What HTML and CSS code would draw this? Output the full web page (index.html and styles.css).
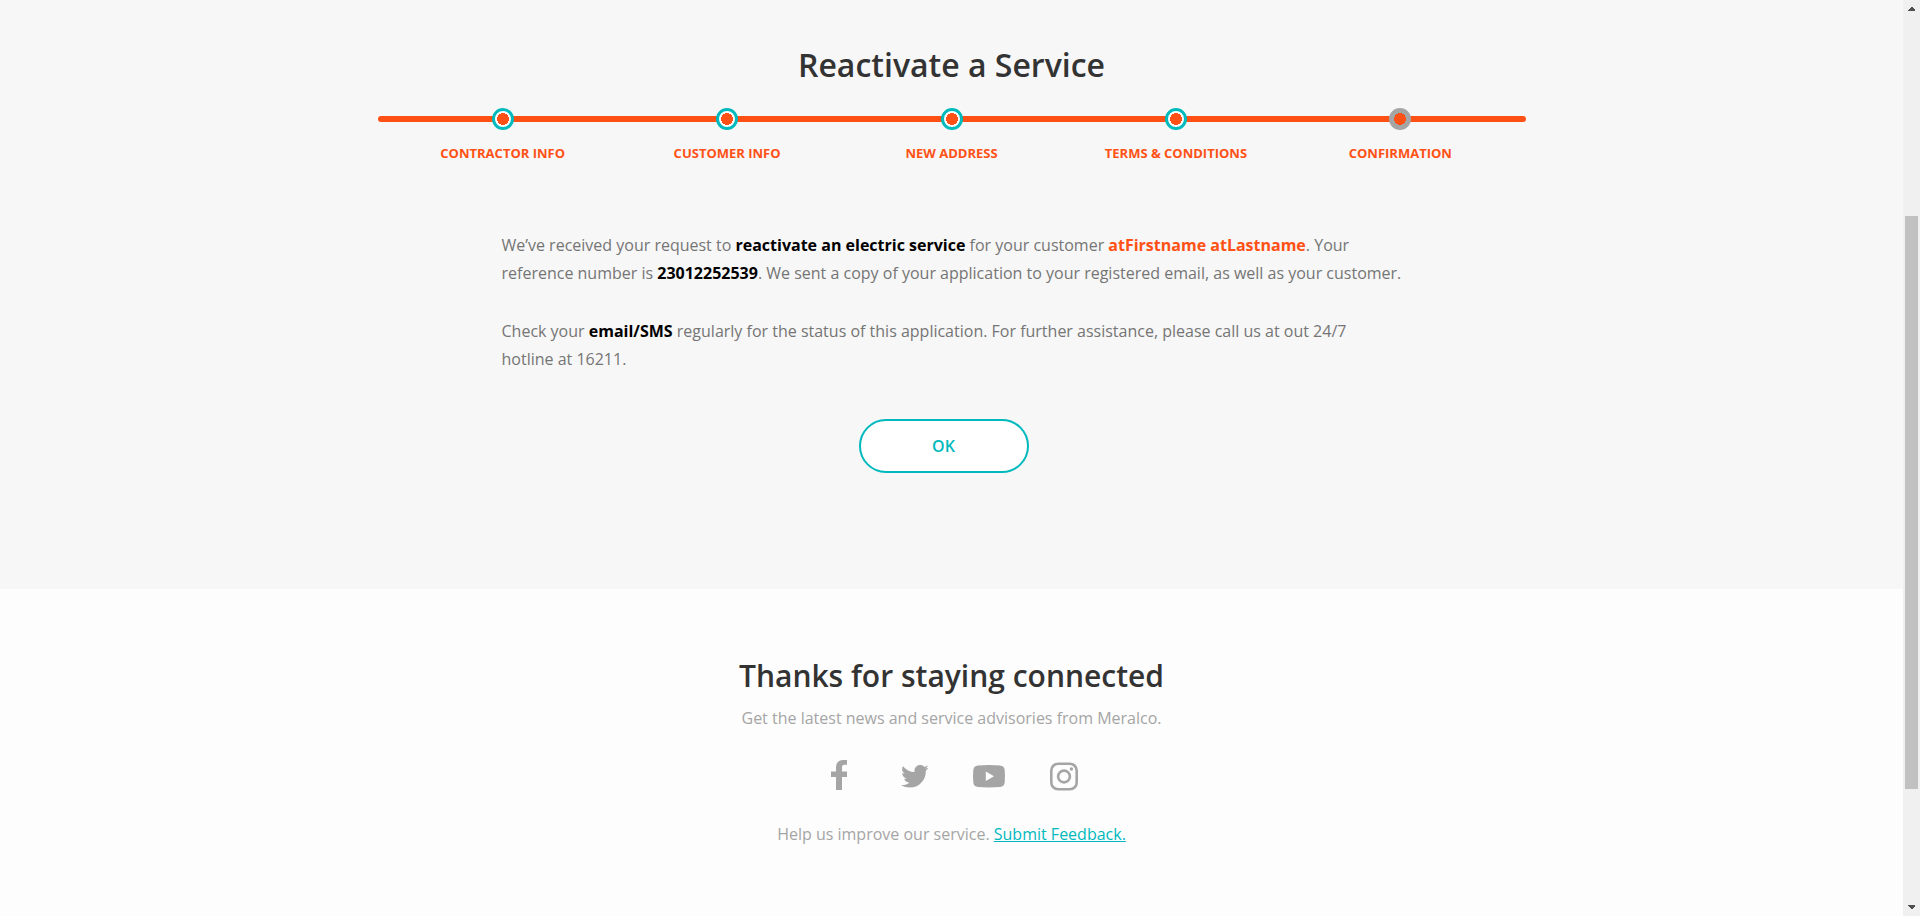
FILE: index.html
```html
<!DOCTYPE html>
<html lang="en">
<head>
<meta charset="utf-8">
<title>Reactivate a Service</title>
<link rel="stylesheet" href="styles.css">
</head>
<body>
<div class="page">
  <main class="application">
    <h1 class="application-title">Reactivate a Service</h1>
    <ol class="steps">
      <li class="step"><span class="dot"></span>Contractor Info</li>
      <li class="step"><span class="dot"></span>Customer Info</li>
      <li class="step"><span class="dot"></span>New Address</li>
      <li class="step"><span class="dot"></span>Terms &amp; Conditions</li>
      <li class="step"><span class="dot dot-current"></span>Confirmation</li>
    </ol>
    <div class="message">
      <p>We’ve received your request to <strong>reactivate an electric service</strong> for your customer <strong class="customer">atFirstname atLastname</strong>. Your reference number is <strong>23012252539</strong>. We sent a copy of your application to your registered email, as well as your customer.</p>
      <p>Check your <strong>email/SMS</strong> regularly for the status of this application. For further assistance, please call us at out 24/7 hotline at 16211.</p>
    </div>
    <button class="ok" type="button">OK</button>
  </main>
  <footer class="connect">
    <h2 class="connect-title">Thanks for staying connected</h2>
    <p class="connect-text">Get the latest news and service advisories from Meralco.</p>
    <nav class="social" aria-label="Social media">
      <a href="#" aria-label="Facebook"><svg width="36" height="32" viewBox="0 0 36 32"><path d="M15 31V18H10v-5.600h5V8.600C15 3.700 17.600 1 22.400 1H26v4.800h-2.400C21.600 5.800 21 6.800 21 8.600v3.800h5V18h-5v13z"/></svg></a>
      <a href="#" aria-label="Twitter"><svg width="36" height="32" viewBox="0 0 36 32"><path transform="translate(5 3.500) scale(.054)" d="M459.370 151.716c.325 4.548.325 9.097.325 13.645 0 138.720-105.583 298.558-298.558 298.558-59.452 0-114.680-17.219-161.137-47.106 8.447.974 16.568 1.299 25.340 1.299 49.055 0 94.213-16.568 130.274-44.832-46.132-.975-84.792-31.188-98.112-72.772 6.498.974 12.995 1.624 19.818 1.624 9.421 0 18.843-1.300 27.614-3.573-48.081-9.747-84.143-51.980-84.143-102.985v-1.299c13.969 7.797 30.214 12.670 47.431 13.319-28.264-18.843-46.781-51.005-46.781-87.391 0-19.492 5.197-37.360 14.294-52.954 51.655 63.675 129.300 105.258 216.365 109.807-1.624-7.797-2.599-15.918-2.599-24.040 0-57.828 46.782-104.934 104.934-104.934 30.213 0 57.502 12.670 76.670 33.137 23.715-4.548 46.456-13.320 66.599-25.340-7.798 24.366-24.366 44.833-46.132 57.827 21.117-2.273 41.584-8.122 60.426-16.243-14.292 20.791-32.161 39.308-52.628 54.253z"/></svg></a>
      <a href="#" aria-label="YouTube"><svg width="36" height="32" viewBox="0 0 36 32"><path fill-rule="evenodd" d="M7 6.400q11-.8 22 0 4.300.3 4.700 4.500.6 6.600 0 12.600-.4 4.200-4.700 4.500-11 .8-22 0-4.300-.3-4.700-4.500-.6-6.600 0-12.600Q2.700 6.700 7 6.400zM14.800 12.500v9.400l8.200-4.700z"/></svg></a>
      <a href="#" aria-label="Instagram"><svg width="36" height="32" viewBox="0 0 36 32"><g fill="none" stroke="currentColor"><rect x="5.300" y="4.800" width="25.400" height="25.400" rx="6.800" stroke-width="2.600"/><circle cx="18" cy="17.500" r="5.900" stroke-width="2.600"/></g><circle cx="25.400" cy="10" r="1.700"/></svg></a>
    </nav>
    <p class="connect-text">Help us improve our service. <a class="feedback" href="#">Submit Feedback.</a></p>
  </footer>
</div>
<div class="scrollbar" aria-hidden="true">
  <svg width="17" height="17" viewBox="0 0 17 17" shape-rendering="crispEdges"><path d="M5 11V10L8.500 6.500 12 10v1z"/></svg>
  <div class="scroll-track"><div class="scroll-thumb"></div></div>
  <svg width="17" height="17" viewBox="0 0 17 17" shape-rendering="crispEdges"><path d="M5 6v1l3.500 3.500L12 7V6z"/></svg>
</div>
</body>
</html>
```
FILE: styles.css
```css
* {
  box-sizing: border-box;
}

body {
  margin: 0;
  display: flex;
  min-height: 100vh;
  font: 16px/28px "Open Sans", "Noto Sans", sans-serif;
  color: #757575;
  background: #fdfdfd;
}

h1, h2, p, ol {
  margin: 0;
  padding: 0;
  font-weight: 400;
}

.page {
  flex: 1;
}

.application {
  display: flex;
  flex-direction: column;
  align-items: center;
  padding: 43px 24px 116px;
  background: #f7f7f7;
}

.application-title,
.connect-title {
  font-weight: 600;
  line-height: 44px;
  color: #333;
}

.application-title {
  font-size: 32px;
}

.steps {
  position: relative;
  display: flex;
  width: 100%;
  max-width: 1148px;
  margin-top: 21px;
  padding: 0 13px;
  list-style: none;
}

/* Progress line running behind the dots */
.steps::before {
  content: "";
  position: absolute;
  inset: 8px 0 auto;
  height: 6px;
  border-radius: 3px;
  background: #ff5115;
}

.step {
  position: relative;
  flex: 1;
  display: flex;
  flex-direction: column;
  align-items: center;
  gap: 13px;
  font-size: 13px;
  line-height: 20px;
  font-weight: 700;
  text-transform: uppercase;
  color: #ff5115;
}

.dot {
  width: 22px;
  height: 22px;
  border: 3px solid #00b9bd;
  border-radius: 50%;
  background: radial-gradient(circle, #ff5115 6px, #fff 6px);
}

.dot-current {
  border-color: #a5a5a5;
  background: radial-gradient(circle, #ff5115 6px, #a5a5a5 6px);
}

.message {
  display: grid;
  gap: 30px;
  width: 100%;
  max-width: 900px;
  margin-top: 68px;
}

.message strong {
  font-weight: 700;
  color: #000;
}

.message .customer {
  color: #ff5115;
}

.ok {
  width: 170px;
  height: 54px;
  margin: 46px 16px 0 0;
  border: 2px solid #00b9bd;
  border-radius: 27px;
  background: #fff;
  font: inherit;
  font-weight: 600;
  color: #00b9bd;
}

.connect {
  display: flex;
  flex-direction: column;
  align-items: center;
  padding: 65px 24px;
}

.connect-title {
  font-size: 30px;
}

.connect-text {
  margin-top: 6px;
  color: #a5a5a5;
}

.social {
  display: flex;
  gap: 39px;
  margin: 27px 0 23px;
}

.social a {
  display: flex;
  color: #a5a5a5;
}

.social svg {
  fill: currentColor;
}

.feedback {
  color: #00b9bd;
}

.scrollbar {
  display: flex;
  flex-direction: column;
  width: 17px;
  background: #f0f0f0;
}

.scrollbar svg {
  fill: #505050;
}

.scroll-track {
  flex: 1;
  display: grid;
  grid-template-rows: 199fr 573fr 110fr;
  padding: 0 2px;
}

.scroll-thumb {
  grid-row: 2;
  background: #c1c1c1;
}
```
